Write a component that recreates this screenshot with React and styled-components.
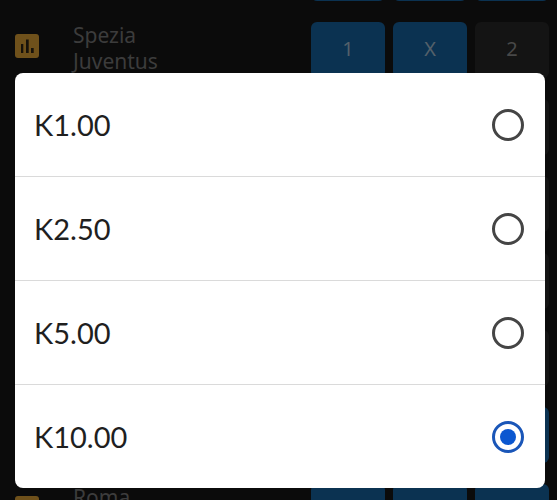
import { useState } from "react"
import styled, { createGlobalStyle } from "styled-components"

const matches = [
  { id: 1, teams: [], odds: [{ on: true }, { on: true }, { on: true }] },
  {
    id: 2,
    teams: ["Spezia", "Juventus"],
    odds: [{ label: "1", on: true }, { label: "X", on: true }, { label: "2" }],
  },
  { id: 3, teams: [], odds: [{}, {}, {}] },
  { id: 4, teams: [], odds: [{}, {}, {}] },
  { id: 5, teams: [], odds: [{}, {}, {}] },
  { id: 6, teams: [], odds: [{}, {}, {}] },
  { id: 7, teams: [], odds: [{}, {}, { on: true }] },
  { id: 8, teams: ["Roma"], odds: [{ on: true }, { on: true }, { on: true }] },
]

const stakes = ["K1.00", "K2.50", "K5.00", "K10.00"]

function Match({ teams, odds }) {
  return (
    <Row>
      <StatsButton aria-label="Statistics">
        <svg width="24" height="24" viewBox="0 0 24 24">
          <path d="M6 10h2.300v9H6zM11 5.500h2.700V19H11zM16 14h2.700v5H16z" fill="#17120a" />
        </svg>
      </StatsButton>
      <Teams>
        {teams.map((team) => (
          <span key={team}>{team}</span>
        ))}
      </Teams>
      <Odds>
        {odds.map((odd, i) => (
          <Pick key={i} $on={odd.on}>{odd.label}</Pick>
        ))}
      </Odds>
    </Row>
  )
}

export default function App() {
  const [stake, setStake] = useState("K10.00")

  return (
    <Page>
      <GlobalStyle />
      <List>
        {matches.map((match) => (
          <Match key={match.id} teams={match.teams} odds={match.odds} />
        ))}
      </List>
      <Dialog role="radiogroup" aria-label="Stake">
        {stakes.map((value) => (
          <Option key={value}>
            <span>{value}</span>
            <Radio
              type="radio"
              name="stake"
              value={value}
              checked={stake === value}
              onChange={() => setStake(value)}
            />
          </Option>
        ))}
      </Dialog>
    </Page>
  )
}

const GlobalStyle = createGlobalStyle`
  * {
    box-sizing: border-box;
  }
  body {
    margin: 0;
    background: #0b0b0b;
  }
`

const Page = styled.div`
  position: relative;
  height: 100vh;
  overflow: hidden;
  font-family: "Noto Sans", sans-serif;
`

/* scrolled so the first match is almost out of view */
const List = styled.div`
  display: flex;
  flex-direction: column;
  gap: 21px;
  margin-top: -55px;
  padding: 0 8px 0 15px;
`

const Row = styled.div`
  display: flex;
  align-items: flex-start;
  flex-shrink: 0;
`

const StatsButton = styled.button`
  display: flex;
  width: 24px;
  height: 24px;
  margin: 12px 34px 0 0;
  padding: 0;
  border: 0;
  border-radius: 3px;
  background: #6f511b;
`

const Teams = styled.div`
  display: flex;
  flex: 1;
  flex-direction: column;
  font-size: 21px;
  line-height: 26px;
  color: #3c3c3c;
`

const Odds = styled.div`
  display: grid;
  grid-template-columns: repeat(3, 74px);
  gap: 8px;
`

const Pick = styled.button`
  height: 56px;
  padding: 0 0 3px;
  border: 0;
  border-radius: 6px;
  font-family: "Noto Sans", sans-serif;
  font-size: 20px;
  background: ${(props) => (props.$on ? "#0b3251" : "#141414")};
  color: ${(props) => (props.$on ? "#53606a" : "#484848")};
`

const Dialog = styled.div`
  position: absolute;
  top: 73px;
  left: 15px;
  right: 12px;
  overflow: hidden;
  border-radius: 8px;
  background: #fff;
`

const Option = styled.label`
  display: flex;
  align-items: center;
  justify-content: space-between;
  height: 103px;
  padding: 0 21px 0 19px;
  font-family: Lato, sans-serif;
  font-size: 29px;
  color: #1f1f1f;

  & + & {
    height: 104px;
    border-top: 1px solid #dadada;
  }
`

const Radio = styled.input`
  appearance: none;
  display: grid;
  place-items: center;
  width: 32px;
  height: 32px;
  margin: 0;
  border: 3px solid #454545;
  border-radius: 50%;

  &:checked {
    border-color: #1a56b8;
  }

  &:checked::before {
    content: "";
    width: 16px;
    height: 16px;
    border-radius: 50%;
    background: #0b57d0;
  }
`
